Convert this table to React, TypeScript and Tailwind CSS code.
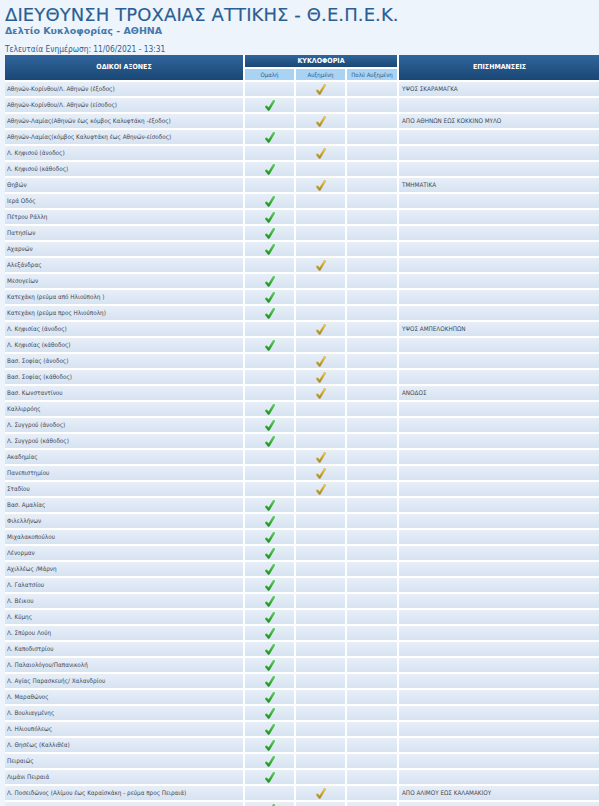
import React from "react";

type Row = [string, number, string];

// 1 = Ομαλή, 2 = Αυξημένη, 3 = Πολύ Αυξημένη
const rows: Row[] = [
  ["Αθηνών-Κορίνθου/Λ. Αθηνών (έξοδος)", 2, "ΥΨΟΣ ΣΚΑΡΑΜΑΓΚΑ"],
  ["Αθηνών-Κορίνθου/Λ. Αθηνών (είσοδος)", 1, ""],
  ["Αθηνών-Λαμίας(Αθηνών έως κόμβος Καλυφτάκη -έξοδος)", 2, "ΑΠΟ ΑΘΗΝΩΝ ΕΩΣ ΚΟΚΚΙΝΟ ΜΥΛΟ"],
  ["Αθηνών-Λαμίας(κόμβος Καλυφτάκη έως Αθηνών-είσοδος)", 1, ""],
  ["Λ. Κηφισού (άνοδος)", 2, ""],
  ["Λ. Κηφισού (κάθοδος)", 1, ""],
  ["Θηβών", 2, "ΤΜΗΜΑΤΙΚΑ"],
  ["Ιερά Οδός", 1, ""],
  ["Πέτρου Ράλλη", 1, ""],
  ["Πατησίων", 1, ""],
  ["Αχαρνών", 1, ""],
  ["Αλεξάνδρας", 2, ""],
  ["Μεσογείων", 1, ""],
  ["Κατεχάκη (ρεύμα από Ηλιούπολη )", 1, ""],
  ["Κατεχάκη (ρεύμα προς Ηλιούπολη)", 1, ""],
  ["Λ. Κηφισίας (άνοδος)", 2, "ΥΨΟΣ ΑΜΠΕΛΟΚΗΠΩΝ"],
  ["Λ. Κηφισίας (κάθοδος)", 1, ""],
  ["Βασ. Σοφίας (άνοδος)", 2, ""],
  ["Βασ. Σοφίας (κάθοδος)", 2, ""],
  ["Βασ. Κωνσταντίνου", 2, "ΑΝΟΔΟΣ"],
  ["Καλλιρρόης", 1, ""],
  ["Λ. Συγγρού (άνοδος)", 1, ""],
  ["Λ. Συγγρού (κάθοδος)", 1, ""],
  ["Ακαδημίας", 2, ""],
  ["Πανεπιστημίου", 2, ""],
  ["Σταδίου", 2, ""],
  ["Βασ. Αμαλίας", 1, ""],
  ["Φιλελλήνων", 1, ""],
  ["Μιχαλακοπούλου", 1, ""],
  ["Λένορμαν", 1, ""],
  ["Αχιλλέως /Μάρνη", 1, ""],
  ["Λ. Γαλατσίου", 1, ""],
  ["Λ. Βέικου", 1, ""],
  ["Λ. Κύμης", 1, ""],
  ["Λ. Σπύρου Λούη", 1, ""],
  ["Λ. Καποδιστρίου", 1, ""],
  ["Λ. Παλαιολόγου/Παπανικολή", 1, ""],
  ["Λ. Αγίας Παρασκευής/ Χαλανδρίου", 1, ""],
  ["Λ. Μαραθώνος", 1, ""],
  ["Λ. Βουλιαγμένης", 1, ""],
  ["Λ. Ηλιουπόλεως", 1, ""],
  ["Λ. Θησέως (Καλλιθέα)", 1, ""],
  ["Πειραιώς", 1, ""],
  ["Λιμάνι Πειραιά", 1, ""],
  ["Λ. Ποσειδώνος (Αλίμου έως Καραϊσκάκη - ρεύμα προς Πειραιά)", 2, "ΑΠΟ ΑΛΙΜΟΥ ΕΩΣ ΚΑΛΑΜΑΚΙΟΥ"],
  ["", 1, ""],
];

const Check = ({ yellow }: { yellow?: boolean }) => (
  <svg width="10" height="11" viewBox="0 0 10 11">
    <defs>
      <linearGradient id={yellow ? "gy" : "gg"} x1="0" y1="0" x2="0" y2="1">
        <stop offset="0" stopColor={yellow ? "#e2c255" : "#55cf50"} />
        <stop offset="1" stopColor={yellow ? "#b08a26" : "#1c9420"} />
      </linearGradient>
    </defs>
    <path
      d="M1.4 6.8 L3.6 9.6 L8.8 1.2"
      fill="none"
      stroke={`url(#${yellow ? "gy" : "gg"})`}
      strokeWidth="2.4"
      strokeLinecap="round"
      strokeLinejoin="round"
    />
  </svg>
);

const cell = "h-[14px] bg-gradient-to-b from-[#e7eef8] to-[#d7e3f1]";
const head = "bg-gradient-to-b from-[#30659c] to-[#1a4775] text-white font-bold";
const sub = "h-[11px] bg-[#a9d2f3] text-[#2e5f8f] text-[6px] flex items-center justify-center";

export default function App() {
  return (
    <div className="h-[806px] overflow-hidden bg-[#edf4fc] pl-[5px] font-['DejaVu_Sans',sans-serif]">
      <div className="pt-[5px] text-[18px] leading-[20px] text-[#2b5e93] tracking-[0.1px] [-webkit-text-stroke:0.15px_#2b5e93]">
        ΔΙΕΥΘΥΝΣΗ ΤΡΟΧΑΙΑΣ ΑΤΤΙΚΗΣ - Θ.Ε.Π.Ε.Κ.
      </div>
      <div className="text-[9.5px] leading-[12px] font-bold text-[#4878a8]">
        Δελτίο Κυκλοφορίας - ΑΘΗΝΑ
      </div>
      <div className="mt-[7px] font-['DejaVu_Sans_Condensed','DejaVu_Sans',sans-serif] text-[8.3px] leading-[11px] text-[#2d5e8e]">
        Τελευταία Ενημέρωση: 11/06/2021 - 13:31
      </div>
      <div className="grid grid-cols-[238px_49px_49px_50px_201px] gap-[2px] bg-white font-['DejaVu_Sans_Condensed','DejaVu_Sans',sans-serif] text-[6.3px] text-[#3a4656]">
        <div className={`${head} row-span-2 flex items-center justify-center text-[7px]`}>ΟΔΙΚΟΙ ΑΞΟΝΕΣ</div>
        <div className={`${head} col-span-3 h-[12px] flex items-center justify-center text-[7px]`}>ΚΥΚΛΟΦΟΡΙΑ</div>
        <div className={`${head} row-span-2 flex items-center justify-center text-[7px]`}>ΕΠΙΣΗΜΑΝΣΕΙΣ</div>
        <div className={sub}>Ομαλή</div>
        <div className={sub}>Αυξημένη</div>
        <div className={sub}>Πολύ Αυξημένη</div>
        {rows.map(([name, s, note], i) => (
          <React.Fragment key={i}>
            <div className={`${cell} flex items-center pl-[2px] whitespace-nowrap`}>{name}</div>
            <div className={`${cell} flex items-center justify-center`}>{s === 1 && <Check />}</div>
            <div className={`${cell} flex items-center justify-center`}>{s === 2 && <Check yellow />}</div>
            <div className={`${cell} flex items-center justify-center`}>{s === 3 && <Check />}</div>
            <div className={`${cell} flex items-center pl-[3px] whitespace-nowrap`}>{note}</div>
          </React.Fragment>
        ))}
      </div>
    </div>
  );
}
